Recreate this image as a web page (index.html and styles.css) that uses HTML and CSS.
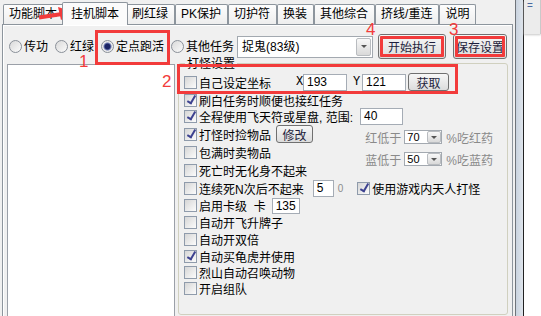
FILE: index.html
```html
<!doctype html>
<html lang="zh-CN">
<head>
    <meta charset="UTF-8">
    <meta name="viewport" content="width=device-width, initial-scale=1.0">
    <title>挂机脚本</title>
    <link rel="stylesheet" href="styles.css">
</head>
<body>
    <div class="screen">
        <div class="window">
            <div class="tabs">
                <div class="tab">功能脚本</div>
                <div class="tab active">挂机脚本</div>
                <div class="tab">刷红绿</div>
                <div class="tab">PK保护</div>
                <div class="tab">切护符</div>
                <div class="tab">换装</div>
                <div class="tab">其他综合</div>
                <div class="tab">挤线/重连</div>
                <div class="tab">说明</div>
            </div>
            <div class="page">
                <div class="toolbar">
                    <label class="radio"><span class="dot"></span>传功</label>
                    <label class="radio"><span class="dot"></span>红绿</label>
                    <label class="radio on"><span class="dot"></span>定点跑活</label>
                    <label class="radio"><span class="dot"></span>其他任务</label>
                    <div class="combo task"><span class="combo-text">捉鬼(83级)</span><span class="drop"></span></div>
                    <button class="btn run mark">开始执行</button>
                    <button class="btn save mark">保存设置</button>
                </div>
                <div class="body">
                    <div class="list"></div>
                    <div class="group">
                        <div class="group-title">打怪设置</div>
                        <div class="rows">
                            <div class="row first">
                                <span class="check"></span><span>自己设定坐标</span>
                                <span class="axis x">X</span><span class="field coord">193</span>
                                <span class="axis y">Y</span><span class="field coord">121</span>
                                <button class="btn fetch">获取</button>
                            </div>
                            <div class="row short">
                                <span class="check on"></span><span>刷白任务时顺便也接红任务</span>
                            </div>
                            <div class="row">
                                <span class="check on"></span><span>全程使用飞天符或星盘, 范围:</span>
                                <span class="field range">40</span>
                            </div>
                            <div class="row tall">
                                <span class="check on"></span><span>打怪时捡物品</span>
                                <button class="btn edit">修改</button>
                                <div class="side">
                                    <div class="side-line">
                                        <span class="side-label">红低于</span>
                                        <div class="combo mini"><span class="combo-text">70</span><span class="drop"></span></div>
                                        <span>%吃红药</span>
                                    </div>
                                    <div class="side-line">
                                        <span class="side-label">蓝低于</span>
                                        <div class="combo mini"><span class="combo-text">50</span><span class="drop"></span></div>
                                        <span>%吃蓝药</span>
                                    </div>
                                </div>
                            </div>
                            <div class="row tall">
                                <span class="check"></span><span>包满时卖物品</span>
                            </div>
                            <div class="row tall">
                                <span class="check"></span><span>死亡时无化身不起来</span>
                            </div>
                            <div class="row tall">
                                <span class="check"></span><span>连续死N次后不起来</span>
                                <span class="field count">5</span>
                                <span class="hint">0</span>
                                <span class="check on spaced"></span><span>使用游戏内天人打怪</span>
                            </div>
                            <div class="row">
                                <span class="check"></span><span>启用卡级&nbsp;&nbsp;卡</span>
                                <span class="field level">135</span>
                            </div>
                            <div class="row">
                                <span class="check"></span><span>自动开飞升牌子</span>
                            </div>
                            <div class="row">
                                <span class="check"></span><span>自动开双倍</span>
                            </div>
                            <div class="row short">
                                <span class="check on"></span><span>自动买龟虎并使用</span>
                            </div>
                            <div class="row short">
                                <span class="check"></span><span>烈山自动召唤动物</span>
                            </div>
                            <div class="row short">
                                <span class="check"></span><span>开启组队</span>
                            </div>
                        </div>
                    </div>
                </div>
            </div>
        </div>

        <div class="edge">
            <div class="edge-dark"></div>
            <div class="edge-blue"></div>
            <div class="edge-back">
                <div class="edge-title">=</div>
            </div>
        </div>

        <!-- annotations drawn over the screenshot -->
        <svg class="arrow" width="80" height="26" viewBox="0 0 80 26">
            <path d="M39 17.5 L62 14" stroke="#f23b3b" stroke-width="4" fill="none"/>
            <polygon points="74,12 58,7 61,20" fill="#f23b3b"/>
        </svg>
        <div class="mark-box box-one"></div>
        <div class="mark-box box-two"></div>
        <span class="note n1">1</span>
        <span class="note n2">2</span>
        <span class="note n3">3</span>
        <span class="note n4">4</span>
    </div>
</body>
</html>
```

FILE: styles.css
```css
body {
    margin: 0;
    background-color: #fff;
    font-family: "Liberation Sans", "Noto Sans CJK SC", sans-serif;
    font-size: 12px;
    color: #000;
}

.screen {
    position: relative;
    display: flex;
    width: 541px;
    height: 316px;
    overflow: hidden;
    background-color: #f0f0f0;
}

.window {
    flex: none;
    width: 515px;
}

/* tab strip */
.tabs {
    display: flex;
    align-items: flex-end;
    height: 24px;
    padding-left: 3px;
}

.tab {
    height: 19px;
    line-height: 19px;
    padding: 0 6px 0 5px;
    border: 1px solid #8d959d;
    border-bottom: none;
    border-radius: 2px 2px 0 0;
    background: linear-gradient(#fdfdfd, #eeeeee);
    white-space: nowrap;
}

.tab.active {
    position: relative;
    z-index: 1;
    height: 20px;
    padding: 2px 8px 0;
    margin: 0 -2px -1px;
    background: #fbfbfb;
}

.page {
    width: 509px;
    height: 300px;
    margin-left: 2px;
    border: 1px solid #8d959d;
    background-color: #f0f0f0;
    box-shadow: inset 1px 1px #fff;
}

/* top row: radios, task combo, buttons */
.toolbar {
    display: flex;
    align-items: center;
    height: 25px;
    padding: 9px 0 0 6px;
}

.radio {
    display: flex;
    align-items: center;
    line-height: 14px;
    white-space: nowrap;
}

.radio + .radio {
    margin-left: 7px;
}

.dot {
    width: 11px;
    height: 11px;
    margin-right: 2px;
    border: 1px solid #8a9099;
    border-radius: 50%;
    background: linear-gradient(135deg, #d9d9d9, #fbfbfb);
}

.radio.on .dot {
    background: radial-gradient(circle, #1b2466 0, #1b2466 2.5px, #6f7cb4 3.5px, #e9e9e9 4.5px, #fbfbfb);
}

.combo {
    display: flex;
    box-sizing: border-box;
    border: 1px solid #a3a9b0;
    background-color: #fff;
}

.combo-text {
    flex: 1;
    white-space: nowrap;
}

.drop {
    display: flex;
    align-items: center;
    justify-content: center;
    width: 14px;
    margin: 1px;
    border: 1px solid #b9bcc0;
    border-radius: 2px;
    box-sizing: border-box;
    background: linear-gradient(#f8f8f8, #d9d9d9);
}

.drop::after {
    content: "";
    border-left: 3px solid transparent;
    border-right: 3px solid transparent;
    border-top: 3px solid #555;
}

.combo.task {
    width: 136px;
    height: 22px;
    margin-left: 3px;
    line-height: 20px;
}

.combo.task .combo-text {
    padding-left: 4px;
}

.combo.task .drop {
    width: 15px;
}

.btn {
    box-sizing: border-box;
    padding: 0;
    font: inherit;
    color: #1e1e3c;
    border: 1px solid #707070;
    border-radius: 3px;
    background: linear-gradient(#f7f7f7, #dcdcdc);
    white-space: nowrap;
}

.btn.mark {
    outline: 3px solid #f23b3b;
    outline-offset: -5px;
}

.btn.run {
    width: 68px;
    height: 25px;
    margin-left: 5px;
}

.btn.save {
    width: 54px;
    height: 25px;
    margin-left: 7px;
}

/* list + settings group */
.body {
    display: flex;
    margin-top: 5px;
    padding-left: 4px;
}

.list {
    width: 166px;
    height: 260px;
    border: 1px solid #9ba0a8;
    background-color: #fff;
}

.group {
    width: 328px;
    height: 250px;
    margin: -1px 0 0 3px;
    border: 1px solid #d0d0bf;
    border-radius: 3px;
}

.group-title {
    width: fit-content;
    margin: -7px 0 0 6px;
    padding: 0 2px;
    line-height: 14px;
    background-color: #f0f0f0;
}

.rows {
    padding-left: 5px;
}

.row {
    display: flex;
    align-items: center;
    height: 17px;
    white-space: nowrap;
}

.row.first {
    height: 20px;
    margin-top: 1px;
}

.row.short {
    height: 16px;
}

.row.tall {
    height: 18px;
}

.check {
    position: relative;
    flex: none;
    width: 11px;
    height: 11px;
    margin-right: 2px;
    border: 1px solid #8f9bab;
    background: linear-gradient(135deg, #d6d6d6, #fcfcfc);
}

.check.on::after {
    content: "";
    position: absolute;
    left: 4px;
    top: -1px;
    width: 3px;
    height: 8px;
    border: solid #3d4290;
    border-width: 0 2px 2px 0;
    transform: rotate(30deg);
}

.check.spaced {
    margin-left: 14px;
}

.axis {
    width: 7px;
    font-family: "Liberation Mono", monospace;
}

.axis.x {
    margin-left: 25px;
}

.axis.y {
    margin-left: 6px;
    margin-right: 2px;
}

.field {
    box-sizing: border-box;
    height: 17px;
    line-height: 15px;
    padding: 0 3px;
    border: 1px solid #a5acb5;
    background-color: #fff;
}

.field.coord {
    width: 44px;
}

.field.range {
    width: 43px;
    margin-left: 7px;
}

.field.count {
    width: 21px;
    margin-left: 9px;
}

.field.level {
    width: 28px;
    height: 16px;
    margin-left: 6px;
}

.hint {
    margin-left: 4px;
    font-size: 10px;
    color: #8c8c8c;
}

.btn.fetch {
    width: 41px;
    height: 18px;
    margin-left: 2px;
}

.btn.edit {
    width: 37px;
    height: 18px;
    margin-left: 5px;
}

.side {
    align-self: flex-start;
    margin: 5px 14px 0 auto;
    color: #8a8a8a;
}

.side-line {
    display: flex;
    align-items: center;
    height: 14px;
}

.side-line + .side-line {
    margin-top: 8px;
}

.side-label {
    width: 36px;
}

.combo.mini {
    width: 38px;
    height: 14px;
    margin: 0 4px 0 3px;
    line-height: 12px;
    color: #000;
}

.combo.mini .combo-text {
    padding-left: 2px;
    font-size: 11px;
}

.combo.mini .drop {
    width: 14px;
    margin: 0;
}

/* window chrome at the right edge */
.edge {
    display: flex;
    flex: 1;
}

.edge-dark {
    width: 1px;
    background-color: #6f747a;
}

.edge-blue {
    width: 7px;
    background: linear-gradient(90deg, #c9d3df, #dfe5ec);
}

.edge-back {
    flex: 1;
    border-left: 1px solid #222;
    background-color: #fff;
}

.edge-title {
    height: 34px;
    padding: 1px 0 0 3px;
    box-sizing: border-box;
    line-height: 10px;
    font-size: 10px;
    color: #4a6aa0;
    background-color: #ececec;
    border-right: 1px solid #c9c9c9;
    box-shadow: 0 1px 2px #c8c8c8;
}

/* red annotations */
.arrow {
    position: absolute;
    left: 0;
    top: 0;
}

.mark-box {
    position: absolute;
    box-sizing: border-box;
    border: 3px solid #f23b3b;
}

.box-one {
    left: 95px;
    top: 30px;
    width: 75px;
    height: 35px;
}

.box-two {
    left: 177px;
    top: 64px;
    width: 281px;
    height: 30px;
}

.note {
    position: absolute;
    font-size: 17px;
    line-height: 15px;
    color: #f23b3b;
}

.n1 {
    left: 79px;
    top: 54px;
}

.n2 {
    left: 162px;
    top: 74px;
}

.n3 {
    left: 449px;
    top: 22px;
}

.n4 {
    left: 366px;
    top: 22px;
}
```
